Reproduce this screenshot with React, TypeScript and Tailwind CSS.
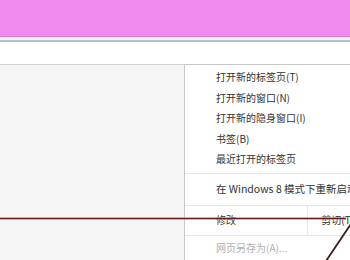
import React from "react";

const font = { fontFamily: '"Noto Sans CJK SC", "Noto Sans", sans-serif' };

function Item({ children, className = "" }: { children: React.ReactNode; className?: string }) {
  return (
    <div className={`h-[20.5px] flex items-center pl-[31px] whitespace-nowrap ${className}`}>{children}</div>
  );
}

export default function App() {
  return (
    <div className="relative w-[350px] h-[260px] overflow-hidden bg-[#f5f5f5]" style={font}>
      <div className="flex flex-col h-full">
        <div className="h-[36px] bg-[#f08aee] shrink-0" />
        <div className="h-[1px] bg-[#d67fd5] shrink-0" />
        <div className="h-[3px] bg-[#f7eef6] shrink-0" />
        <div className="h-[2px] bg-[#b4c2c0] shrink-0" />
        <div className="h-[22px] bg-white shrink-0" />
        <div className="h-[1px] bg-[#d4d4d4] shrink-0" />
        <div className="flex-1 bg-[#f5f5f5]" />
      </div>

      <div className="absolute left-[184px] top-[64px] w-[170px] h-[200px] bg-white border-l border-t border-[#c8c8c8] text-[10px] text-[#333] leading-none">
        <div className="pt-[2px]">
          <Item>打开新的标签页(T)</Item>
          <Item>打开新的窗口(N)</Item>
          <Item>打开新的隐身窗口(I)</Item>
          <Item>书签(B)</Item>
          <Item>最近打开的标签页</Item>
        </div>
        <div className="mt-[3px] h-[1px] bg-[#e6e6e6]" />
        <div className="h-[31px] flex items-center pl-[31px] whitespace-nowrap text-[10.5px]">
          在 Windows 8 模式下重新启动 Chrome
        </div>
        <div className="h-[1px] bg-[#e6e6e6]" />
        <div className="h-[29px] flex">
          <div className="w-[129px] flex items-center pl-[31px] border-r border-[#e6e6e6]">修改</div>
          <div className="flex items-center pl-[13px] whitespace-nowrap">剪切(T)</div>
        </div>
        <div className="h-[1px] bg-[#e6e6e6]" />
        <div className="h-[24px] flex items-center pl-[31px] text-[#b0b0b0] whitespace-nowrap">网页另存为(A)...</div>
      </div>

      <svg className="absolute left-0 top-0" width="350" height="260" viewBox="0 0 350 260">
        <line x1="0" y1="218.5" x2="346" y2="218.5" stroke="#f5c8c8" strokeWidth="3" opacity="0.5" />
        <line x1="0" y1="218.5" x2="346" y2="218.5" stroke="#6a1c1c" strokeWidth="1.5" />
        <line x1="326" y1="261" x2="351" y2="224" stroke="#3b1d1d" strokeWidth="1.8" />
      </svg>
    </div>
  );
}
